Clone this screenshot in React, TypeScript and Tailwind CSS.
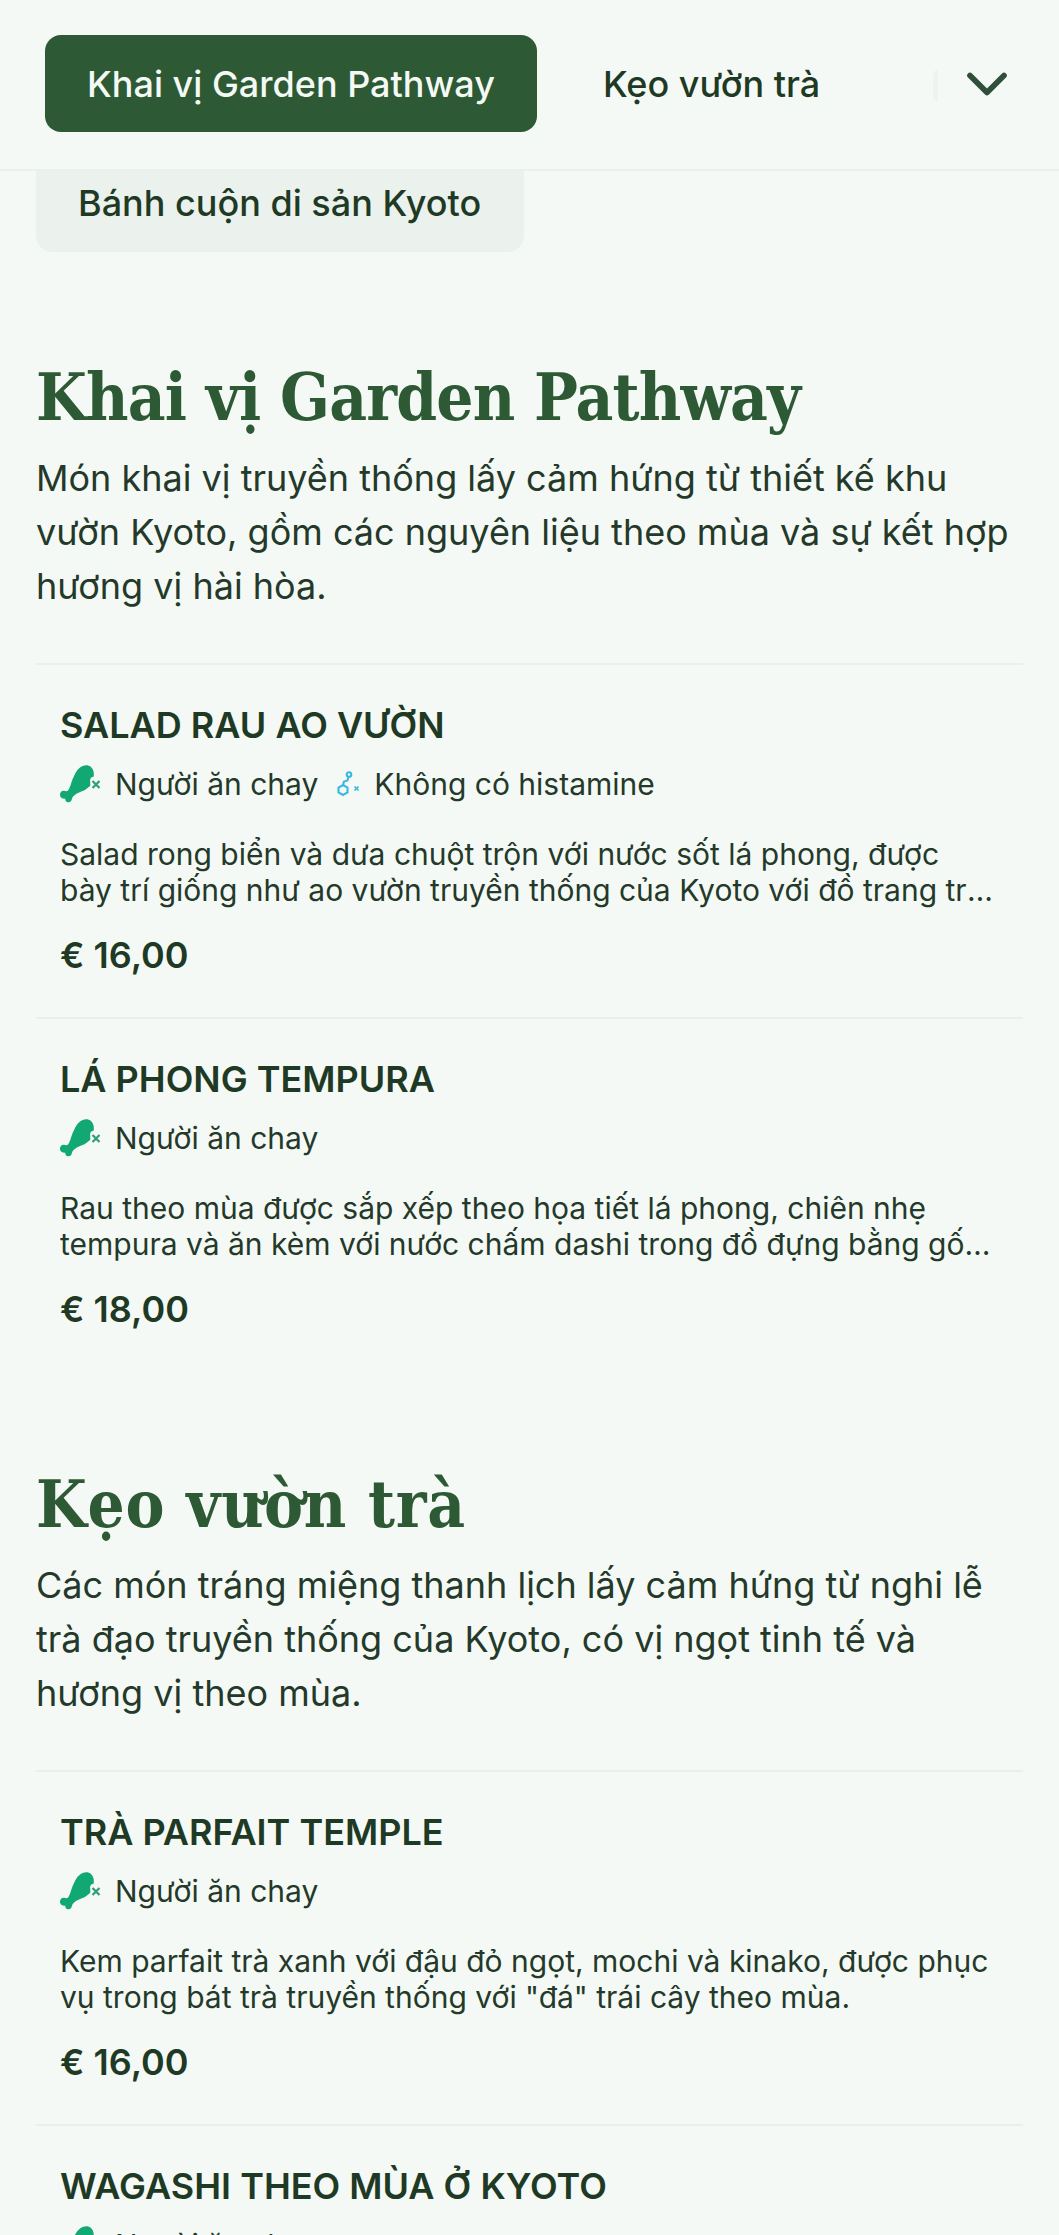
import React from 'react';
import { ChevronDown } from 'lucide-react';

const sans = "font-['Inter','Noto_Sans',sans-serif]";

function MeatFreeIcon() {
  return (
    <svg width="42" height="38" viewBox="0 0 42 38" className="shrink-0">
      <path
        d="M1.500 27.500C3 25.500 5 27 7 27C9 26.500 10 24 11 21C12.500 16 14 12 16 8.500C18.500 4 23 .5 27.500 1C31.500 1.500 33.500 6 33 11C30.500 11.500 29 14 29.500 17L29.500 20.500C27 23 24 25 20.500 26C17 27 14.500 28.500 12.500 31C11 33 11.500 34 10.500 35.500C9 37.500 6 36.500 6 34.500C6 33.500 6 33 6.500 32.500C5 33 2.500 33.500 1.200 31.500C.5 30 .7 28.500 1.500 27.500Z"
        fill="#12a874"
        stroke="#12a874"
        strokeWidth="1.500"
      />
      <path d="M32.500 16l7 7m0-7l-7 7" stroke="#2f9d78" strokeWidth="2.200" fill="none" />
    </svg>
  );
}

function HistamineIcon() {
  return (
    <svg width="24" height="26" viewBox="0 0 24 26" className="shrink-0" fill="none" stroke="#3ab8de" strokeWidth="2.100">
      <circle cx="13" cy="3.500" r="2.300" />
      <path d="M12.500 5.800L11.500 9.500L8 10.500L7 14" />
      <path d="M7 14l4.500 2.500v5L7 24l-4.500-2.500v-5z" />
      <path d="M18.500 15.500l4 4m0-4l-4 4" strokeWidth="1.700" />
    </svg>
  );
}

type Dish = { name: string; desc: string; price: string; histamine?: boolean };

function DishRow({ dish }: { dish: Dish }) {
  return (
    <div className="border-t-2 border-[#e9efea] h-[354px] pl-[24px] pt-[38px]">
      <h3 className="text-[36px] leading-[44px] font-semibold text-[#1f3a24]">{dish.name}</h3>
      <div className="flex items-center h-[38px] mt-[18px] text-[30px] text-[#24392a]">
        <MeatFreeIcon />
        <span className="ml-[13px]">Người ăn chay</span>
        {dish.histamine && (
          <>
            <span className="ml-[18px]"><HistamineIcon /></span>
            <span className="ml-[14px]">Không có histamine</span>
          </>
        )}
      </div>
      <p className="mt-[33px] text-[30px] leading-[36px] text-[#24392a] line-clamp-2 pr-[25px]">{dish.desc}</p>
      <div className="mt-[25px] text-[36px] leading-[44px] font-semibold text-[#1f3a24]">{dish.price}</div>
    </div>
  );
}

function Section({ title, titleClass, desc, dishes }: { title: string; titleClass: string; desc: string; dishes: Dish[] }) {
  return (
    <section>
      <h2 className={`font-['DejaVu_Serif_Condensed','DejaVu_Serif',serif] font-bold text-[65px] leading-[84px] text-[#2d5a34] ${titleClass}`}>{title}</h2>
      <p className="mt-[12px] text-[36px] leading-[54px] text-[#24392a]">{desc}</p>
      <div className="mt-[50px]">
        {dishes.map(d => <DishRow key={d.name} dish={d} />)}
      </div>
    </section>
  );
}

export default function App() {
  return (
    <div className={`${sans} w-[1059px] h-[2235px] overflow-hidden bg-[#f4f9f5]`}>
      <header className="h-[171px] border-b-2 border-[#eceff0] flex items-start relative pl-[45px] pt-[35px] overflow-hidden">
        <button className="h-[97px] w-[492px] rounded-[16px] bg-[#2d5a34] text-[#f4f9f5] text-[36px] font-medium shrink-0">Khai vị Garden Pathway</button>
        <button className="ml-[66px] h-[97px] text-[36px] font-medium text-[#1f3a24] shrink-0">Kẹo vườn trà</button>
        <div className="absolute left-[933px] top-[70px] w-[5px] h-[32px] rounded-l-full bg-[#eef3ef]" />
        <ChevronDown className="absolute left-[953px] top-[50px] text-[#2f4f3a]" size={68} strokeWidth={2} />
      </header>

      <div className="h-[81px] w-[488px] ml-[36px] rounded-b-[16px] bg-[#ebf1ec] pl-[42px] pt-[10px] text-[36px] font-medium leading-[44px] text-[#1f3a24]">Bánh cuộn di sản Kyoto</div>

      <main className="pl-[36px] pr-[36px] pt-[103px]">
        <Section
          title="Khai vị Garden Pathway"
          titleClass="tracking-[-0.8px]"
          desc="Món khai vị truyền thống lấy cảm hứng từ thiết kế khu vườn Kyoto, gồm các nguyên liệu theo mùa và sự kết hợp hương vị hài hòa."
          dishes={[
            { name: 'SALAD RAU AO VƯỜN', desc: 'Salad rong biển và dưa chuột trộn với nước sốt lá phong, được bày trí giống như ao vườn truyền thống của Kyoto với đồ trang trí ăn được và hoa theo mùa tươi.', price: '€ 16,00', histamine: true },
            { name: 'LÁ PHONG TEMPURA', desc: 'Rau theo mùa được sắp xếp theo họa tiết lá phong, chiên nhẹ tempura và ăn kèm với nước chấm dashi trong đồ đựng bằng gốm truyền thống của vùng Kyoto.', price: '€ 18,00' },
          ]}
        />
        <div className="mt-[91px]">
          <Section
            title="Kẹo vườn trà"
            titleClass="tracking-[0.7px]"
            desc="Các món tráng miệng thanh lịch lấy cảm hứng từ nghi lễ trà đạo truyền thống của Kyoto, có vị ngọt tinh tế và hương vị theo mùa."
            dishes={[
              { name: 'TRÀ PARFAIT TEMPLE', desc: 'Kem parfait trà xanh với đậu đỏ ngọt, mochi và kinako, được phục vụ trong bát trà truyền thống với "đá" trái cây theo mùa.', price: '€ 16,00' },
              { name: 'WAGASHI THEO MÙA Ở KYOTO', desc: '', price: '' },
            ]}
          />
        </div>
      </main>
    </div>
  );
}
